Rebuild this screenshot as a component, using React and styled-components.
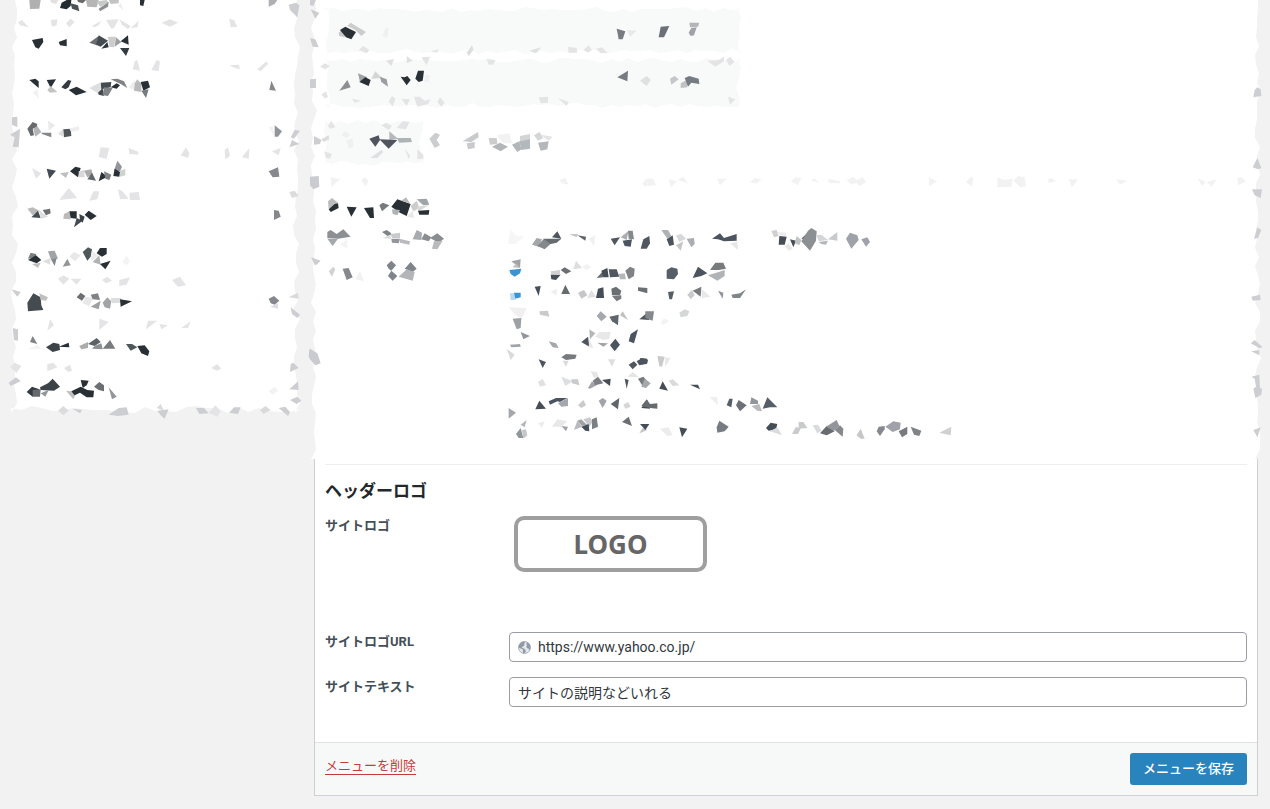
import React from "react";
import styled, { createGlobalStyle } from "styled-components";

const GlobalStyle = createGlobalStyle`
  *, *::before, *::after { box-sizing: border-box; }
  body {
    margin: 0;
    background: #f2f2f2;
    color: #32373c;
    font-family: Roboto, "Noto Sans CJK JP", sans-serif;
    font-size: 13px;
    line-height: 20px;
  }
`;

/* Torn outline: every side wanders inwards by up to `depth` pixels. */
function torn({ across, down, depth = 6, openTop, openBottom }) {
  let seed = across * 31 + down * 17;
  const next = () => {
    seed = (seed * 1103515245 + 12345) % 2147483648;
    return Math.round((seed / 2147483648) * depth);
  };
  const pts = [];
  for (let i = 0; i <= across; i++) pts.push(`${(i / across) * 100}% ${openTop ? 0 : next()}px`);
  for (let i = 0; i <= down; i++) pts.push(`calc(100% - ${next()}px) ${(i / down) * 100}%`);
  for (let i = across; i >= 0; i--)
    pts.push(`${(i / across) * 100}% ${openBottom ? "100%" : `calc(100% - ${next()}px)`}`);
  for (let i = down; i >= 0; i--) pts.push(`${next()}px ${(i / down) * 100}%`);
  return `polygon(${pts.join(",")})`;
}

const Page = styled.div`
  display: flex;
  align-items: flex-start;
  gap: 16px;
  padding: 0 12px 12px 14px;
`;

const Sidebar = styled.aside`
  flex: 0 0 284px;
  display: grid;
`;

const Main = styled.main`
  flex: 1;
  min-width: 0;
`;

const Concealed = styled.section`
  display: grid;
  grid-template-columns: minmax(0, 1fr);
  height: 459px;
`;

const Sheet = styled.div`
  grid-area: 1 / 1;
  background: ${(p) => p.$tone || "#fff"};
  margin: ${(p) => p.$bleed || "0 -3px"};
  clip-path: ${(p) => torn(p.$edge)};
`;

const Stack = styled.div`
  grid-area: 1 / 1;
  z-index: 1;
  display: flex;
  flex-direction: column;
`;

const List = styled.ul`
  grid-area: 1 / 1;
  z-index: 1;
  list-style: none;
  margin: 0;
  padding: 0;
`;

const ListItem = styled.li`
  display: block;
`;

const Band = styled.div`
  display: grid;
  grid-template-columns: minmax(0, 1fr);
`;

const Bar = styled.div`
  grid-area: 1 / 1;
  display: grid;
  width: ${(p) => p.$width}px;
  margin: ${(p) => p.$inset};
`;

const Drawing = styled.svg`
  grid-area: 1 / 1;
  z-index: 1;
  display: block;
  overflow: visible;
  width: ${(p) => p.$w}px;
  height: ${(p) => p.$h}px;
`;

const RightEdge = styled(Drawing)`
  justify-self: end;
`;

/* Each line of `art` is "colour x,y x,y ..."; drawing units are a third of a pixel. */
function parse(art) {
  return art
    .trim()
    .split("\n")
    .filter((l) => l.trim())
    .map((l) => {
      const [fill, ...pts] = l.trim().split(/\s+/);
      return { fill: `#${fill}`, points: pts.join(" ") };
    });
}

function Shards({ as: Box = Drawing, x = 12, y, w, h, groups }) {
  return (
    <Box $w={w} $h={h} viewBox={`${x} ${y} ${w * 3} ${h * 3}`} aria-hidden="true">
      {groups.map(([dx, dy, art], g) => (
        <g key={g} transform={`translate(${dx} ${dy})`}>
          {parse(art).map((s, i) => (
            <polygon key={i} fill={s.fill} points={s.points} />
          ))}
        </g>
      ))}
    </Box>
  );
}

const SIDEBAR_ROWS = [
  { y: 0, h: 23, art: `
    b0b0b0 88,0 122,0 118,26 90,27
    e2e2e2 150,0 176,0 168,12 154,8
    222b31 185,8 200,0 214,0 212,18 200,28 180,24
    4c5357 212,10 234,16 238,34 216,26
    666a6d 232,0 258,0 248,10 234,6
    b5b5b5 258,0 296,0 290,22 262,20
    c8c8c8 290,4 320,0 326,8 300,20
    8c8f92 296,26 326,6 324,20 300,34
    c4c4c4 326,0 356,0 356,10 332,12
    eeeeee 354,18 362,8 370,30
    282f35 420,0 434,0 430,18 420,16
    aeb0b3 806,0 832,0 824,12 806,20
    cdced2 866,14 888,8 898,16 892,52 870,30` },
  { y: 69, h: 43, art: `
    e4e4e6 54,66 66,60 86,82 60,76
    e4e4e6 152,60 172,58 170,76 156,80
    e4e4e6 198,70 212,56 224,66 208,82
    e4e4e6 276,78 304,62 296,76 282,82
    e4e4e6 318,60 356,58 342,84 334,86
    e4e4e6 358,58 392,78 384,88 366,74
    e4e4e6 392,84 416,62 412,82
    e4e4e6 484,68 510,58 534,68 510,80
    e4e4e6 688,56 702,60 712,80 692,82
    282f35 96,120 128,114 130,126 116,146 106,142
    282f35 176,126 200,117 200,139 180,136
    6c6f71 268,128 296,108 290,136
    454c51 296,106 324,122 302,140 288,134
    2e363b 304,146 322,126 326,142
    cccccc 324,110 348,110 342,142 328,140
    9c9fa1 348,112 364,126 344,140
    282f35 362,124 384,106 386,134
    343b40 360,144 388,144 378,168` },
  { y: 198, h: 43, art: `
    e4e4e6 404,184 412,180 420,212 398,208
    e4e4e6 454,210 470,180 480,184 476,214
    e4e4e6 688,196 716,194 720,208 700,202
    e4e4e6 772,208 800,184 804,192 782,214
    282f35 88,240 106,236 116,244 116,264
    282f35 140,240 168,238 152,264
    c4c4c4 142,270 152,258 172,276 150,278
    f2f2f2 98,278 112,266 118,296
    343b40 184,262 204,240 214,242 206,262 196,268
    282f35 206,270 230,260 260,276 228,286
    dedede 268,264 300,248 304,264 294,280
    454c51 302,248 334,246 332,262 304,268
    7f8386 332,238 352,236 372,244 382,264 362,252
    282f35 332,262 350,250 360,256 350,266
    454c51 294,278 308,264 312,288 296,284
    808486 312,262 338,264 324,288 308,286
    eeeeee 386,262 404,240 402,270
    bababa 404,250 412,238 424,252 424,276 402,272
    282f35 422,246 444,242 450,262 430,272
    777b7e 424,272 446,268 438,294
    85898d 814,242 828,272 808,270` },
  { y: 327, h: 43, art: `
    cdced2 36,352 52,350 52,382 36,374
    cdced2 30,404 60,386 56,442 38,440 44,412
    666a6d 82,386 98,366 112,372 110,382 98,386 102,406 92,408
    b2b4b5 100,386 112,378 124,396 106,410
    e8ebea 144,362 166,376 146,392
    85888a 124,398 154,398 154,412 126,402
    dddddd 174,402 190,386 190,410
    50575b 190,388 212,386 214,408 192,412
    eeeeee 208,386 236,378 238,390 214,396
    f2f2f2 806,382 820,378 822,408
    92969b 824,376 846,394 834,410 824,410
    cdced2 872,412 884,390 900,392 882,416
    cdced2 868,442 876,420 898,432` },
  { y: 456, h: 43, art: `
    e4e4e6 302,442 328,444 320,476 296,472
    e4e4e6 386,444 416,456 414,464 388,462
    e4e4e6 542,466 558,442 568,460 564,474
    e4e4e6 674,450 684,442 690,468 676,478
    e4e4e6 726,472 748,444 746,476
    e4e4e6 816,454 842,444 836,466
    e4e4e6 96,504 124,520 108,536
    454c51 140,506 168,512 148,536
    bdbebf 180,520 206,516 198,534
    282f35 210,514 226,500 242,504 234,532
    d8d8d8 236,514 252,510 254,532 236,532
    ababab 252,512 274,508 278,524 262,532
    60666a 262,538 276,518 288,542
    282f35 296,544 304,516 322,530
    808486 312,514 334,524 328,540 316,536
    92969b 342,512 352,482 366,500 360,514
    282f35 340,528 344,506 360,516 358,530
    d0d2d2 360,512 376,506 376,526 360,530
    85898d 806,514 834,502 838,530 818,532` },
  { y: 585, h: 43, art: `
    e4e4e6 178,600 206,564 232,594
    e4e4e6 268,602 280,574 298,574 292,598
    e4e4e6 354,568 366,572 386,596 360,598
    e4e4e6 388,578 416,576 420,600 390,600
    dcdcde 868,576 884,572 896,588 876,594
    bababa 82,626 98,622 118,632 98,646
    454c51 94,652 114,632 122,654
    dedede 116,630 144,650 124,656
    6b6f72 128,630 150,626 152,640 138,646
    bababa 192,642 208,634 212,658 190,656
    282f35 208,634 230,634 230,656 212,654
    454c51 222,682 230,654 248,662
    3c4348 238,642 254,650 248,668 240,660
    282f35 254,644 266,632 290,648 272,660
    85898d 822,630 836,632 842,650 822,660` },
  { y: 84, h: 43, art: `
    7b8083 84,146 92,128 108,132 108,142
    282f35 84,150 108,136 124,150 110,160
    c0c0c0 96,162 122,158 114,174
    a0a4a6 144,124 164,122 174,146 152,146
    85898d 152,146 170,144 164,168
    dedede 128,154 152,144 150,164
    929699 188,170 202,146 212,166
    e8e8e8 208,140 222,126 242,136 226,154
    50575b 248,126 264,112 276,118 272,140 262,152
    ececec 276,122 296,138 272,154
    282f35 290,130 300,114 320,114 320,132 306,140
    b0b3b5 278,156 298,136 302,164
    282f35 300,162 332,152 316,178
    f4f4f4 368,156 380,136 390,156 378,166
    cdced2 934,142 960,152 944,166` },
  { y: 213, h: 43, art: `
    e4e4e6 174,206 190,196 208,206 190,224
    e4e4e6 212,206 244,206 230,224
    e4e4e6 306,210 322,200 336,212 318,220
    e4e4e6 358,210 390,202 380,224 358,228
    e4e4e6 516,210 540,200 558,226 534,230
    cdced2 34,238 62,246 52,260
    454c51 82,278 100,250 122,262 124,286 130,300 84,304
    c0c0c0 118,250 144,262 138,272 122,270
    6b6f72 230,262 242,248 256,258 246,272
    e8e8e8 256,260 280,264 268,288 248,280
    7f8386 272,254 294,250 300,270 278,268
    9ea1a3 272,290 302,272 296,298
    a0a4a6 308,278 322,262 334,274 330,296 314,292
    dddddd 332,264 364,264 362,278 336,280
    282f35 360,268 396,274 362,290
    85898d 806,266 822,258 838,272 824,284 812,280
    dcdde2 810,290 834,280 834,296
    dadadc 866,262 894,248 896,266
    cdced2 872,292 900,314 892,324 876,312` },
  { y: 342, h: 43, art: `
    e4e4e6 150,328 162,346 142,362
    e4e4e6 298,326 326,336 298,360
    e4e4e6 444,332 472,332 438,358
    e4e4e6 478,342 504,346 484,358
    e4e4e6 544,354 572,334 564,354
    cdced2 38,354 54,358 54,392 42,390
    7f8386 90,396 98,378 112,402
    f4f4f4 84,418 112,404 126,418
    3c4348 138,412 160,398 178,402 180,420 158,426
    282f35 176,410 206,398 208,412
    ababab 238,408 264,396 264,414 244,418
    5c6266 264,402 290,384 302,396 284,408
    8c9093 284,408 304,400 308,418 276,416
    777b7e 308,416 330,390 346,416
    50575b 378,402 396,402 412,412 392,422
    282f35 412,408 434,406 448,424 444,438 424,430
    c8c9cd 928,418 958,448 950,466 926,442` },
  { y: 471, h: 43, art: `
    e4e4e6 30,472 44,458 64,468 50,488
    e4e4e6 142,462 160,458 172,472 142,484
    e4e4e6 192,474 210,464 216,482 204,486
    e4e4e6 634,474 652,462 664,476 650,482
    cdced2 872,462 880,458 896,474 870,486
    cdced2 26,518 48,502 62,514 32,528
    343b40 80,546 96,530 118,538 98,560
    666a6d 98,540 122,538 120,560 98,560
    3c4348 120,532 144,520 158,506 180,530 162,542 122,540
    929699 122,550 146,540 136,560
    c0c0c0 198,542 230,546 220,568
    282f35 242,510 266,512 260,526 248,534
    282f35 214,544 242,530 262,540 282,542 280,562 260,562 240,548 224,556
    6b6f72 282,530 298,516 312,526 312,544 296,540
    92969b 326,532 350,560 336,568
    f2f2f2 806,544 824,530 834,542 818,554
    cdced2 868,538 894,514 896,540
    cdced2 870,570 892,560 904,572 890,582
    dcdcde 174,602 190,588 206,602 190,616
    cdced2 218,596 246,600 240,610
    cdced2 326,614 356,594 380,592 386,614 354,618
    dadadc 470,594 482,582 492,602
    cdced2 472,602 506,598 494,626 484,618
    cdced2 588,594 612,594 626,610 598,612
    e4e4e6 626,608 646,586 662,604 652,620
    cdced2 688,608 702,592 722,592 714,612
    dadadc 780,600 796,588 812,600 790,612
    cdced2 836,594 856,590 870,606 864,618` },
];

const BAR_ONE = `
  cdced2 0,0 18,0 10,18 0,16
  cdced2 2,28 28,38 16,56
  cdced2 0,114 16,118 26,142 8,140
  c6c8c9 86,98 96,90 106,112 88,108
  282f35 90,90 106,80 138,96 124,118 108,112
  cccccc 112,78 122,68 168,96 154,108 136,90
  f0f0f0 218,108 226,84 236,84 232,114
  777b82 920,86 946,94 938,118 926,118
  e8e8e8 952,90 980,92 960,110
  6b7077 1046,112 1052,80 1078,78 1062,112
  b4b5b8 1138,68 1168,68 1164,80 1140,82
  a0a2a8 1136,98 1144,84 1160,82 1152,106 1142,108
  e4e4e6 146,150 160,138 178,150 170,160
  e4e4e6 362,154 388,148 380,158
  dddddf 470,158 486,136 490,150 476,168
  e0e0e2 658,152 694,142 678,160
  e4e4e6 774,140 800,144 802,158 776,158
  e4e4e6 820,150 836,136 846,150 834,158
  e4e4e6 858,146 876,142 892,158 872,160`;

const BAR_TWO = `
  e0e0e2 228,182 252,176 244,198
  e0e0e2 290,168 308,182 290,190
  e4e4e6 334,172 360,170 350,196
  e4e4e6 530,178 556,180 550,194 536,194
  e4e4e6 30,200 44,190 60,198 46,208
  e4e4e6 1192,182 1226,180 1242,170 1242,184 1216,200
  e4e4e6 1248,180 1260,170 1274,186 1258,198
  cdced2 0,238 18,236 18,264 0,264
  8c9093 88,272 112,240 122,262
  9fa2a4 144,220 172,232 150,246
  282f35 148,246 166,232 182,240 176,258
  d4d6d6 184,236 196,214 216,234
  9b9ea0 210,230 230,238 234,260 214,246
  282f35 272,230 284,232 292,228 302,240 290,256
  282f35 316,236 324,212 342,212 338,242 326,246
  f0f0f0 346,222 360,228 356,246 342,246
  777b82 922,232 954,212 952,244
  e0e0e2 990,242 1010,228 1022,240 1010,258
  c4c6c7 1080,236 1094,228 1106,238 1084,254
  c0c2c4 1112,250 1130,240 1132,262 1112,264
  777b82 1124,234 1138,228 1166,236 1168,252 1144,248 1134,260
  e4e4e6 34,284 48,274 54,290 46,296
  e4e4e6 126,296 154,302 134,308
  e4e4e6 236,304 246,288 256,296 248,320
  e4e4e6 274,296 300,298 290,318
  e4e4e6 312,290 330,290 344,302 362,298 354,312 322,320
  e4e4e6 382,306 390,292 404,308 394,320
  e4e4e6 686,292 714,290 714,308 692,310
  e4e4e6 744,294 776,306 770,318
  e4e4e6 1254,290 1276,298 1260,314`;

const BUTTON_ROW = `
  e4e4e6 54,378 64,362 76,382 60,386
  e4e4e6 214,376 228,368 246,378 236,390
  e4e4e6 260,384 278,364 298,366 288,388
  f0f0f0 94,404 106,394 122,406 108,414
  f0f0f0 108,422 128,414 130,440 118,446
  cdced2 12,408 34,420 30,432 12,434
  dddddf 34,418 56,406 58,418 40,426
  50545e 178,416 206,406 210,420 196,440
  b6b8bc 238,420 238,394 264,416
  50545e 208,418 262,420 236,446
  aeb4b6 260,414 302,414 306,426 268,428
  dfe0e2 180,474 214,450 220,456 202,474
  e4e4e6 284,446 300,466 296,478
  e4e4e6 322,448 340,464 340,478 322,476
  e4e4e6 42,454 66,462 60,476 48,474
  cccdcf 358,416 376,398 390,404 380,420 390,436 374,444
  c8cacc 458,424 504,396 506,412 484,426
  c8cacc 470,430 494,426 494,444 474,448
  cccccc 536,414 560,414 562,432 540,434
  b2b6b9 546,440 570,428 594,440 572,454
  f2f2f2 560,406 598,400 606,430 580,430
  d2d4d5 630,408 660,402 660,420 630,424
  b2b6b9 606,434 628,424 634,448 622,456
  b2b8bc 628,424 660,418 660,446 634,450
  d4d6d7 672,406 688,396 700,414 684,422
  e4e4e6 692,404 728,410 716,422
  b4b8ba 684,428 716,424 712,448 692,452`;

const RULE_LEFT = `
  c9cbd0 0,530 26,528 28,560 10,568 0,556
  f2f2f3 62,532 92,538 64,560
  f2f2f3 154,540 166,532 176,544 166,560
  f2f2f3 748,540 766,534 776,554 756,550`;

const RULE_MIDDLE = `
  f2f2f3 8,40 18,26 40,26 48,46 12,48
  f2f2f3 86,28 112,34 92,52
  f2f2f3 112,30 130,20 144,40
  f2f2f3 232,26 260,26 240,46
  f2f2f3 330,38 344,24 364,28 352,40
  f2f2f3 452,34 466,22 484,24 474,46
  f2f2f3 514,32 522,24 538,38
  f2f2f3 564,26 600,34 598,40 566,38
  f2f2f3 620,30 640,20 650,30 668,22 678,36 660,48 648,38 636,44
  f2f2f3 866,22 892,34 868,48
  f2f2f3 978,36 992,20 1000,24 996,50`;

const RULE_RIGHT = `
  f2f2f3 142,532 162,540 188,536 184,560 142,562
  f2f2f3 190,542 204,528 224,532 228,558 210,562
  f2f2f3 292,540 304,534 318,542 298,550
  f2f2f3 356,538 384,538 366,562
  f2f2f3 498,538 532,542 510,554
  f2f2f3 742,534 768,546 756,558
  f2f2f3 770,546 800,538 786,560
  f2f2f3 862,534 874,532 888,544 864,556`;

const TITLE_ROW = `
  bcbcbc 54,94 66,84 84,98 56,116
  282f35 56,118 74,102 84,100 86,114 62,126
  282f35 110,110 140,112 124,140
  282f35 162,114 190,112 192,144 180,144
  777b7e 208,106 218,98 238,106 216,124
  282f35 244,110 262,88 302,102 290,138 270,128
  b8b8b8 274,92 288,82 300,100
  b0b3b5 246,118 270,120 262,136 248,132
  cccccc 302,108 320,92 328,114 310,124
  a0a4a6 320,88 350,86 358,104 340,106
  d8d8d8 320,110 356,106 326,124
  282f35 324,122 358,120 356,134 328,134
  e8e8e8 290,140 308,122 312,144`;

const LABEL_ROW = `
  8c8f94 52,186 62,180 80,192 100,178 122,200 84,206 52,204
  a4a7ab 52,206 84,206 68,228
  f4f4f4 90,224 112,208 112,236
  cdced2 4,264 32,272 18,286
  7f838a 216,186 230,180 244,190 238,202
  dddddf 218,204 240,194 244,206
  c8cacc 242,192 270,188 270,204 246,204
  92959b 244,206 270,206 266,220 246,218
  b8babd 268,206 300,214 298,224 270,218
  a8abaf 308,208 320,180 336,188 334,210
  8a8d92 334,208 344,190 364,202 356,214
  8a8d92 360,204 382,190 402,206 386,218
  b8babd 366,236 372,214 398,212 382,238
  f6f6f6 594,222 602,178 616,196 642,200 618,222
  a4a7a9 666,224 680,204 696,208 686,230
  85898c 682,228 702,206 724,220 704,238
  666b70 700,206 726,206 754,206 740,218 722,222
  4c555f 726,202 742,184 754,206
  c4c4c4 778,192 804,192 800,202
  5c6266 802,196 828,200 826,212
  f0f0f0 836,206 856,196 852,228
  50575f 902,206 930,202 914,226
  aaaeb2 932,202 956,182 950,210
  85898c 954,182 968,182 972,208 956,206
  4c555f 938,212 966,208 962,230 944,228
  50575f 992,236 1000,208 1018,198 1020,220 1010,236`;

const LABEL_ROW_MORE = `
  aeb2b5 64,180 84,180 94,198 82,206
  4c555f 80,208 98,196 102,224 88,228
  d6d8d9 108,196 124,192 138,206 118,216
  c4c6c7 108,226 130,214 122,242
  aaaeb2 140,206 162,204 164,222 154,232
  4c555f 216,206 240,190 252,204 290,192 290,212 252,214 234,208
  e6e6e6 270,220 292,216 294,240
  d0d0d0 394,182 410,180 416,198 402,202
  ececec 414,186 438,188 438,198 418,196
  454e57 418,198 440,200 434,224 416,224
  e8e8e8 434,228 446,220 458,236 446,242
  454e57 450,208 468,212 460,232
  c0c2c4 464,220 470,198 484,210 478,226
  4c555f 484,206 508,184 508,208
  8c9093 504,182 514,174 530,184 528,212 510,242 484,214
  d4d6d7 530,196 544,194 564,210 536,214
  b4b7ba 536,216 564,212 558,224 544,222
  c8cacc 564,208 592,186 592,212
  9fa2a8 618,206 630,188 652,196 656,210 634,236
  9fa2a8 664,208 682,202 690,216 678,230`;

const OPTIONS = `
  d0d2d4 56,304 70,290 76,298 66,320
  85898d 98,296 116,294 128,322 110,330
  f2f2f3 136,328 150,302 162,334
  7f838a 230,286 244,272 258,286 244,302 236,296
  7f838a 234,318 244,302 262,318 248,332
  7f838a 284,296 302,276 320,296 308,306
  b4b5b8 266,320 290,298 314,306 308,332
  c9cbd0 0,536 22,550 32,580 16,586 0,568
  a0a2a6 604,274 632,268 630,294
  c0c0c0 608,292 618,280 628,294
  3b94d2 598,300 634,296 630,310 614,320 602,312
  b8d8f0 600,370 614,370 616,390 602,390
  3b94d2 612,368 632,368 632,382 616,386
  d0d0d0 722,304 750,300 750,312 724,314
  6b6f74 752,300 764,292 784,304 768,312
  454e57 722,314 752,314 738,330 724,328
  dcdedf 790,298 798,272 816,294
  f2f2f2 816,290 832,282 844,292 830,300
  666b70 860,324 880,302 880,322
  454e57 874,302 892,294 896,322 880,322
  50575f 896,298 920,298 928,320 900,322
  b4b7ba 926,312 944,310 948,328 930,328
  7f8386 946,302 960,290 974,296 972,318 956,328
  454e57 674,350 692,348 686,378
  666b70 754,372 766,344 780,372
  efefef 722,364 742,356 738,378
  c4c6c7 804,368 822,360 832,376 814,386
  e0e0e2 832,384 844,360 858,380
  454e57 858,384 864,356 880,352 882,384
  6b6f74 904,356 918,350 934,362 930,376 906,376
  777b7e 906,378 934,376 934,386 920,394
  6b6f74 984,352 1012,354 1012,370 984,362
  f0f0f0 596,412 650,414 636,444 620,438
  9da0a5 608,446 634,444 632,474 620,478
  c8cacc 688,424 714,422 718,440 690,434
  a4a7ab 860,438 872,424 890,440 874,454
  60666b 898,440 926,434 924,466 906,454
  c0c0c0 930,436 938,424 954,450
  4f565e 988,448 1014,426 1018,450
  92969b 632,486 660,498 640,508
  a0a4a8 600,524 630,522 632,530 604,532
  dadadc 590,536 614,554 602,570
  a4a7ab 716,514 738,520 746,534 728,532
  b4b7ba 838,478 856,490 840,508
  4c555f 814,516 834,500 838,530
  e8e8e8 838,508 850,534 836,532
  e8e8e8 856,500 868,486 902,486 898,506 880,510
  a0a4a8 862,518 894,520 880,530
  4c555f 900,526 916,506 930,524 914,544
  4c555f 956,514 962,492 984,478 972,520
  4c555f 686,568 708,576 698,594
  777b7e 754,562 768,552 800,554 796,566 768,570
  d8dadc 758,572 776,572 768,590
  dcdedf 894,568 916,568 906,590
  50575f 956,584 972,574 982,584 968,598
  4c555f 980,574 996,564 1012,566 1012,580 988,586
  e0e2e2 684,636 698,626 708,646 690,650
  dcdedf 754,620 788,634 766,648
  c8cacc 784,628 804,628 808,646 786,640
  a0a4a8 834,654 846,634 860,646 840,656
  7b7f84 848,632 864,620 880,640 856,646
  454e57 876,630 902,626 900,648
  e4e6e6 842,604 860,606 866,620 852,624
  e4e6e6 952,620 968,606 988,622
  4f565e 944,626 956,630 950,656
  777b7e 984,626 1000,620 1018,640 1000,652
  454e57 676,718 688,692 708,716
  4c555f 716,694 738,684 772,684 750,696 742,694 720,704
  a4a7ab 744,700 774,684 774,708 754,710
  c8cacc 804,706 820,690 828,706 814,714
  a0a4a8 866,692 878,684 890,692 878,714
  60666b 902,702 928,684 924,718
  d4d6d7 940,704 954,696 962,710 946,716
  a4a7ab 596,714 618,728 596,746
  454e57 994,714 1012,690 1020,716
  b4b7ba 632,764 650,750 644,772
  92969b 618,792 632,774 640,804 626,804
  c4c6c7 636,780 648,778 652,796 640,806
  ececec 684,760 704,754 696,774
  e8e8e8 726,770 742,748 772,754 754,770
  a0a4a8 754,768 774,770 768,784
  b8babd 792,780 802,752 816,770
  9fa2a8 802,752 814,748 832,766 816,768
  c8cacc 820,748 840,742 848,756 838,770
  454e57 814,770 836,762 838,784 826,782
  7b7f84 846,748 860,742 864,770 846,778
  6b6f74 936,756 956,740 966,768
  c4c4c4 988,790 998,774 1012,780`;

const OPTIONS_MORE = `
  565f67 80,300 94,292 112,296 114,312 102,328 80,326
  4c555f 158,324 174,290 202,310 184,318
  777b7e 210,300 226,278 250,278 258,296 236,300
  b0b4b7 204,316 236,306 254,300 254,318 232,332
  565f67 84,366 102,364 96,388 88,388
  c8cacc 142,374 156,360 164,376 152,388
  777b7e 158,362 184,350 182,380
  e8e8e8 184,356 212,380 186,384
  92969b 234,362 250,368 248,386
  7f8689 274,374 300,370 318,358 300,384 278,384
  85898d 16,424 42,424 38,452 16,444
  d4d6d7 118,428 134,418 148,424 142,438 122,442
  f2f4f4 64,450 76,446 88,454 66,466
  4c555f 0,564 24,570 20,582 0,584
  c8cacc 52,558 74,560 66,590 58,588
  e8e8e8 74,562 92,564 76,590
  a4a7ab 4,650 14,626 32,640 18,654
  454e57 58,656 68,634 84,662
  d8dadc 86,632 98,628 118,646 98,648
  454e57 150,644 174,644 180,658
  666b70 4,708 20,688 30,702 52,700 52,716 30,714
  efefef 208,682 232,680 234,706
  565f67 260,706 268,686 278,686 274,712
  6b7077 288,706 296,690 320,706 300,724
  92969b 330,702 334,682 354,692 354,702
  b8babd 334,708 358,702 366,724 352,722
  565f67 368,716 382,682 412,712 390,712
  454e57 0,762 28,762 16,780
  ececec 60,776 86,772 98,796 82,798
  454e57 118,772 142,776 126,802
  777b82 230,772 238,752 266,770 254,784 232,788
  454e57 378,774 392,758 412,762 408,778 386,782
  dcdcde 390,784 412,772 426,796
  c8cacc 456,792 468,770 482,776 474,792
  c8cacc 476,756 490,756 502,774 476,776
  d8dadc 518,766 534,764 544,782 532,790
  666b70 540,790 560,768 584,784 560,796
  92969b 558,770 590,750 598,768 582,782
  85898d 584,780 600,766 610,776 608,800
  c4c6c7 650,796 662,776 674,806 662,806
  85898d 710,784 716,770 734,768 734,778 720,798
  9fa2a8 736,770 760,754 782,758 780,778 758,786
  777b7e 776,784 802,770 802,792 786,802
  7f8386 812,770 844,782 838,798 822,794
  d0d0d2 898,788 934,770 932,796`;

const RIGHT_EDGE = `
  cdced2 914,270 922,262 932,268 934,288 910,292
  cdced2 908,502 922,474 934,504 924,508
  cdced2 906,568 936,568 932,594 914,586
  cdced2 912,716 922,682 934,690 924,714
  cdced2 904,890 930,884 932,900 908,902
  cdced2 902,1030 914,1020 938,1042 928,1044
  cdced2 904,1054 928,1050 928,1066
  cdced2 904,1130 928,1124 930,1164 936,1166 934,1184 916,1194 910,1166 918,1160 914,1136
  cdced2 910,1290 932,1282 922,1312`;

const Box = styled.form`
  background: #fff;
  border: 1px solid #ccd0d4;
  border-top: 0;
`;

const Fields = styled.div`
  padding: 5px 10px 35px;
`;

const Heading = styled.h3`
  margin: 0;
  padding: 15px 0 14px;
  border-top: 1px solid #eee;
  color: #23282d;
  font-size: 17px;
  font-weight: 700;
  line-height: 22px;
`;

const Field = styled.div`
  display: grid;
  grid-template-columns: 184px minmax(0, 1fr);
  align-items: start;
  min-height: ${(p) => p.$height || 30}px;
  margin-bottom: ${(p) => (p.$last ? 0 : 15)}px;
`;

const Label = styled.label`
  color: #444f58;
  font-size: 13px;
  font-weight: 700;
  line-height: 20px;
`;

const LogoButton = styled.button`
  width: 193px;
  height: 56px;
  margin-left: 5px;
  padding: 0;
  border: 4px solid #9f9f9f;
  border-radius: 10px;
  background: #fff;
  color: #666;
  font-family: "Noto Sans", sans-serif;
  font-size: 26px;
  font-weight: 700;
  line-height: 48px;
`;

const InputFrame = styled.div`
  display: flex;
  align-items: center;
  gap: 7px;
  height: 30px;
  padding: 0 8px;
  border: 1px solid #9a9ca3;
  border-radius: 4px;
  background: #fff;
`;

const Input = styled.input`
  flex: 1;
  min-width: 0;
  height: 28px;
  padding: 0;
  border: 0;
  outline: 0;
  background: transparent;
  color: #32373c;
  font: inherit;
  font-size: 14px;
`;

const Globe = styled.svg`
  flex: none;
  width: 13px;
  height: 13px;
`;

const Footer = styled.footer`
  display: flex;
  justify-content: space-between;
  align-items: flex-start;
  padding: 10px;
  border-top: 1px solid #dfe1e3;
  background: #f7f9f9;
`;

const DeleteLink = styled.a`
  margin-top: 5px;
  color: #c53a3a;
  font-size: 13px;
  line-height: 16px;
  border-bottom: 1px solid #c53a3a;
  text-decoration: none;
`;

const SaveButton = styled.button`
  height: 32px;
  padding: 0 13px;
  border: 0;
  border-radius: 3px;
  background: #2984be;
  color: #fff;
  font-family: inherit;
  font-size: 13px;
  font-weight: 500;
  line-height: 32px;
`;

export default function App() {
  return (
    <>
      <GlobalStyle />
      <Page>
        <Sidebar>
          <Sheet $edge={{ across: 28, down: 44, depth: 7, openTop: true }} $bleed="0 -2px -3px -3px" />
          <List>
            {SIDEBAR_ROWS.map((row, i) => (
              <ListItem key={i}>
                <Shards x={42} y={row.y} w={284} h={row.h} groups={[[0, 0, row.art]]} />
              </ListItem>
            ))}
          </List>
        </Sidebar>

        <Main>
          <Concealed>
            <Sheet $edge={{ across: 60, down: 50, depth: 6, openTop: true, openBottom: true }} />
            <Stack>
              <Band>
                <Bar $width={416} $inset="7px 0 0 11px">
                  <Sheet $tone="#f8f9f9" $bleed="0" $edge={{ across: 46, down: 5, depth: 5 }} />
                </Bar>
                <Shards y={0} w={480} h={54} groups={[[0, 0, BAR_ONE]]} />
              </Band>
              <Band>
                <Bar $width={416} $inset="4px 0 0 11px">
                  <Sheet $tone="#f8f9f9" $bleed="0" $edge={{ across: 48, down: 5, depth: 5 }} />
                </Bar>
                <Shards y={162} w={480} h={54} groups={[[0, 0, BAR_TWO]]} />
              </Band>
              <Band>
                <Bar $width={100} $inset="12px 0 0 10px">
                  <Sheet $tone="#f8f9f9" $bleed="0" $edge={{ across: 12, down: 4, depth: 5 }} />
                </Bar>
                <Shards y={324} w={480} h={58} groups={[[0, 0, BUTTON_ROW]]} />
              </Band>
              <Shards
                y={498}
                w={930}
                h={27}
                groups={[[0, 0, RULE_LEFT], [990, 510, RULE_MIDDLE], [1920, 0, RULE_RIGHT]]}
              />
              <Shards y={69} w={480} h={32} groups={[[0, 0, TITLE_ROW]]} />
              <Shards y={165} w={660} h={32} groups={[[0, 0, LABEL_ROW], [990, 0, LABEL_ROW_MORE]]} />
              <Shards y={261} w={660} h={190} groups={[[0, 0, OPTIONS], [990, 0, OPTIONS_MORE]]} />
            </Stack>
            <Shards as={RightEdge} x={894} y={0} w={10} h={459} groups={[[0, 0, RIGHT_EDGE]]} />
          </Concealed>

          <Box onSubmit={(e) => e.preventDefault()}>
            <Fields>
              <Heading>ヘッダーロゴ</Heading>
              <Field $height={101}>
                <Label htmlFor="site-logo">サイトロゴ</Label>
                <LogoButton id="site-logo" type="button">LOGO</LogoButton>
              </Field>
              <Field>
                <Label htmlFor="logo-url">サイトロゴURL</Label>
                <InputFrame>
                  <Globe viewBox="0 0 13 13" aria-hidden="true">
                    <circle cx="6.5" cy="6.5" r="6" fill="#e6e9ec" stroke="#a9b1ba" strokeWidth="1" />
                    <path
                      fill="#909aa6"
                      d="M5.2.6 2.4 1.9.8 4.5.6 6.8 2.7 7.6 5 8.6 4.8 10.8 5.5 12.4 7 11.8 7.8 10.4 7.4 8.8 6 7.6 4.4 7 4 6 5.4 5.3 6.6 4.3 6 3 7 2 6.6.8zM8.8 1.4 8.2 3.2 9.2 4.2 8.2 5.6 9 7.2 10.6 7.6 11 9.6 12.4 7.2 12.1 4.5 10.8 2.2z"
                    />
                  </Globe>
                  <Input id="logo-url" type="url" defaultValue="https://www.yahoo.co.jp/" />
                </InputFrame>
              </Field>
              <Field $last>
                <Label htmlFor="site-text">サイトテキスト</Label>
                <InputFrame>
                  <Input id="site-text" type="text" defaultValue="サイトの説明などいれる" />
                </InputFrame>
              </Field>
            </Fields>
            <Footer>
              <DeleteLink href="#delete">メニューを削除</DeleteLink>
              <SaveButton type="submit">メニューを保存</SaveButton>
            </Footer>
          </Box>
        </Main>
      </Page>
    </>
  );
}
